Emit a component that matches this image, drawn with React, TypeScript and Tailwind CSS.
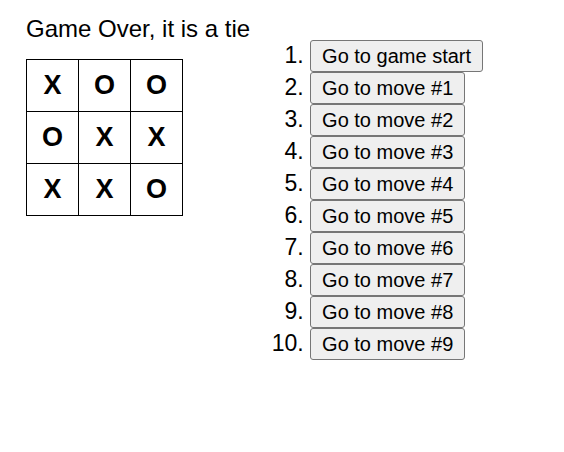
const squares = ["X", "O", "O", "O", "X", "X", "X", "X", "O"];

const moves = [
  "Go to game start",
  "Go to move #1",
  "Go to move #2",
  "Go to move #3",
  "Go to move #4",
  "Go to move #5",
  "Go to move #6",
  "Go to move #7",
  "Go to move #8",
  "Go to move #9",
];

export default function App() {
  return (
    <div className="flex min-h-[452px] items-start bg-white pl-[26px] pt-[15px] font-['Liberation_Sans',Arial,sans-serif] text-black">
      {/* board */}
      <div>
        <div className="text-[24px] leading-[27px]">Game Over, it is a tie</div>
        <div className="mt-[17px] grid w-[157px] grid-cols-3 border-l border-t border-black">
          {squares.map((v, i) => (
            <button
              key={i}
              className="flex h-[52px] w-[52px] items-center justify-center border-b border-r border-black bg-white p-0 text-[27px] font-bold leading-none"
            >
              {v}
            </button>
          ))}
        </div>
      </div>

      {/* history */}
      <ol className="ml-[20px] mt-[25px] list-decimal pl-[40px] text-[23px] leading-[25px]">
        {moves.map((m) => (
          <li key={m}>
            <button className="h-[32px] rounded-[3px] border border-[#767676] bg-[#efefef] px-[11px] text-[20px] leading-[23px] text-black">
              {m}
            </button>
          </li>
        ))}
      </ol>
    </div>
  );
}
